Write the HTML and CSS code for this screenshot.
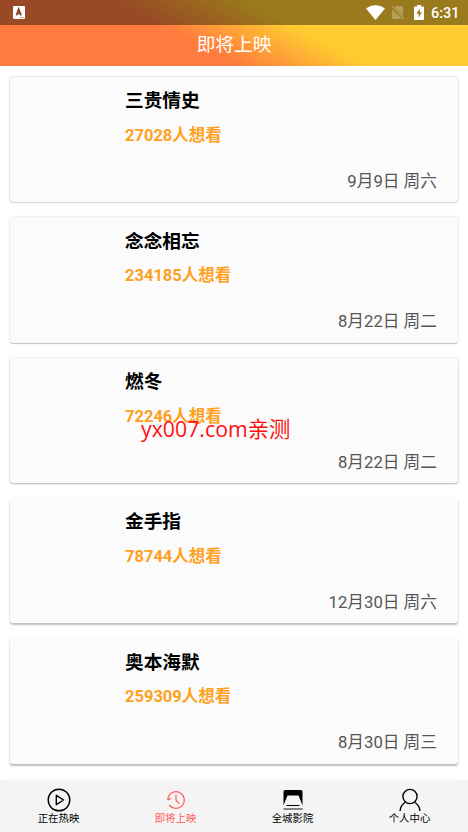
FILE: index.html
```html
<!DOCTYPE html>
<html lang="zh-CN">
<head>
<meta charset="utf-8">
<title>即将上映</title>
<link rel="stylesheet" href="styles.css">
</head>
<body>
<div class="app">
  <header class="header">
    <div class="status">
      <svg class="status-app" width="12" height="13" viewBox="0 0 12 13"><rect width="12" height="13" rx="1" fill="#fff"/><path d="M3.400 9.400 5.700 3.200 8 9.400M4.200 7.400H7.200" fill="none" stroke="#8a3f20" stroke-width="1.700"/><path d="M6.500 11.500H10.500" stroke="#c99b86" stroke-width="1"/></svg>
      <svg class="wifi" width="19" height="15" viewBox="0 0 19 15"><path d="M0 3.500C5.500-1 13.500-1 19 3.500L9.500 15Z" fill="#fff"/></svg>
      <svg class="sim" width="14" height="15" viewBox="0 0 14 15"><path d="M5 1H11Q12 1 12 2V11L3.500 2.500ZM1 4.200 10.800 14H2Q1 14 1 13Z" fill="#b5a05a"/><path d="M.6 1.200 13.200 14" stroke="#b5a05a" stroke-width="1.100"/></svg>
      <svg class="battery" width="10" height="15" viewBox="0 0 10 15"><path d="M3 0H7V1.500H9Q10 1.500 10 2.500V14Q10 15 9 15H1Q0 15 0 14V2.500Q0 1.500 1 1.500H3Z" fill="#fff"/><path d="M5.800 3.500 2.400 8.800H4.600V12.700L7.800 7.200H5.800Z" fill="#9a7a1d"/></svg>
      <span class="clock">6:31</span>
    </div>
    <h1 class="title">即将上映</h1>
  </header>

  <main class="list">
    <article class="card level-1"><h2 class="name">三贵情史</h2><p class="wish">27028人想看</p><p class="date">9月9日 周六</p></article>
    <article class="card level-2"><h2 class="name">念念相忘</h2><p class="wish">234185人想看</p><p class="date">8月22日 周二</p></article>
    <article class="card level-3"><h2 class="name">燃冬</h2><p class="wish">72246人想看</p><p class="date">8月22日 周二</p></article>
    <article class="card level-4"><h2 class="name">金手指</h2><p class="wish">78744人想看</p><p class="date">12月30日 周六</p></article>
    <article class="card level-5"><h2 class="name">奥本海默</h2><p class="wish">259309人想看</p><p class="date">8月30日 周三</p></article>
    <article class="card level-5"></article>
  </main>

  <nav class="tabs">
    <a class="tab"><svg width="24" height="24" viewBox="0 0 24 24" fill="none" stroke="#000" stroke-width="1.400"><circle cx="12" cy="12" r="10.800"/><path d="M9.300 7.300V16.700L16.500 12Z" stroke-linejoin="round"/></svg><span>正在热映</span></a>
    <a class="tab active"><svg width="24" height="24" viewBox="0 0 24 24" fill="none" stroke="#ff5b58" stroke-width="1.200"><path d="M4.400 8.600A8.300 8.300 0 1 1 5.200 16.800M3.700 12 4.400 8.600M3.800 11.900 6.900 10.500M12 6.600V12.300L15.400 15.600"/></svg><span>即将上映</span></a>
    <a class="tab"><svg width="24" height="24" viewBox="0 0 24 24"><path d="M2.500 3.500Q2.500 2 4 2H20Q21.500 2 21.500 3.500V17.500L17.500 7.500H6.500L2.500 17.500Z" fill="#000"/><path d="M5.500 17.500H18.500" stroke="#000" stroke-width="1"/><path d="M2.500 21H21.500" stroke="#555" stroke-width="1.400"/></svg><span>全城影院</span></a>
    <a class="tab"><svg width="24" height="24" viewBox="0 0 24 24" fill="none" stroke="#000" stroke-width="1.400"><circle cx="12" cy="8.500" r="7.100"/><path d="M2 23Q2.600 17.300 7 14.500M17 14.500Q21.400 17.300 22 23"/></svg><span>个人中心</span></a>
  </nav>
  <div class="watermark">yx007.com亲测</div>
</div>
</body>
</html>
```
FILE: styles.css
```css
* { box-sizing: border-box; }
body, h1, h2, p { margin: 0; }
body { background: #fff; font-family: Roboto, "Noto Sans CJK SC", sans-serif; }
.app { position: relative; display: flex; flex-direction: column; height: 832px; overflow: hidden; }
.header { flex: none; height: 66.4px; background: linear-gradient(28deg, #ff7b3e 40%, #ffcb30 62%); }
.status { display: flex; align-items: center; height: 25px; padding: 0 9px 0 13px; background: rgba(0, 0, 0, .4); }
.wifi { margin-left: auto; }
.sim { margin-left: 6px; }
.battery { margin-left: 9px; }
.clock { width: 28px; margin-left: 7px; padding-top: 2px; color: #fff; font-size: 14.5px; font-weight: 500; line-height: 25px; white-space: nowrap; }
.title { color: #fff; font-size: 18.7px; font-weight: 400; line-height: 40px; text-align: center; }
.list { flex: 1; min-height: 0; overflow: hidden; padding: 10.4px 10px 0; display: flex; flex-direction: column; gap: 15px; }
.card { flex: none; height: 125.4px; padding: 10.4px 21px 0 115px; border-radius: 3px; background: #fbfbfb; }
.level-1 { box-shadow: 0 0 2px rgba(0, 0, 0, .3), 0 1px 1px rgba(0, 0, 0, .1); }
.level-2 { box-shadow: 0 0 2px rgba(0, 0, 0, .18), 0 1px 1px rgba(0, 0, 0, .2); }
.level-3 { box-shadow: 0 0 2px rgba(0, 0, 0, .15), 0 1px 2px rgba(0, 0, 0, .25); }
.level-4 { box-shadow: 0 0 2px rgba(0, 0, 0, .1), 0 2px 2px rgba(0, 0, 0, .24); }
.level-5 { box-shadow: 0 0 2px rgba(0, 0, 0, .08), 0 2px 2px rgba(0, 0, 0, .25); }
.name { height: 28px; color: #000; font-size: 18.7px; font-weight: 700; line-height: 28px; }
.wish { height: 24px; margin-top: 8.700px; color: #ffa01e; font-size: 16.5px; font-weight: 700; line-height: 24px; }
.date { height: 24px; margin-top: 22px; color: #555; font-size: 16.7px; line-height: 24px; text-align: right; }
.tabs { flex: none; display: flex; height: 52px; padding-top: 8px; background: #f4f4f4; }
.tab { flex: 1; display: flex; flex-direction: column; align-items: center; color: #000; font-size: 10.4px; line-height: 14px; }
.tab svg { flex: none; }
.active { color: #ff5b58; }
.watermark { position: absolute; left: 141px; top: 414px; color: #ff1010; font-family: "Open Sans", "Noto Sans CJK SC", sans-serif; font-size: 21.3px; line-height: 30px; white-space: nowrap; }
```
